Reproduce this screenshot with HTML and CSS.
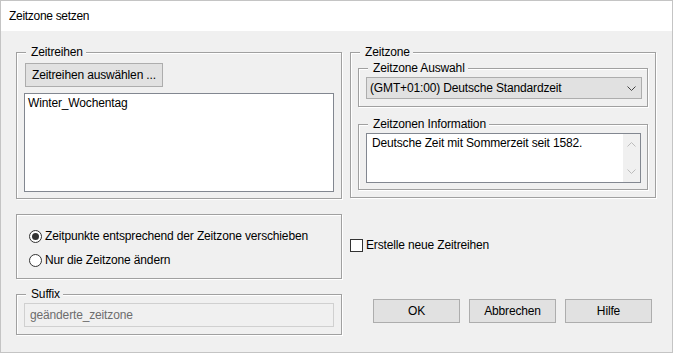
FILE: index.html
```html
<!DOCTYPE html>
<html lang="de">
<head>
<meta charset="utf-8">
<title>Zeitzone setzen</title>
<link rel="stylesheet" href="styles.css">
</head>
<body>
<div class="window">
  <div class="titlebar">Zeitzone setzen</div>
  <div class="content">
    <div class="group g-series">
      <div class="group-head"><span class="group-label">Zeitreihen</span></div>
      <div class="btn btn-select">Zeitreihen auswählen ...</div>
      <div class="listbox"><div class="item">Winter_Wochentag</div></div>
    </div>

    <div class="group g-zone">
      <div class="group-head"><span class="group-label">Zeitzone</span></div>
      <div class="group g-sel">
        <div class="group-head"><span class="group-label">Zeitzone Auswahl</span></div>
        <div class="combo">
          <span class="combo-text">(GMT+01:00) Deutsche Standardzeit</span>
          <svg class="chev" width="9" height="5" viewBox="0 0 9 5"><path d="M0.5 0.5 L4.5 4.5 L8.5 0.5" fill="none" stroke="#444" stroke-width="1"/></svg>
        </div>
      </div>
      <div class="group g-info">
        <div class="group-head"><span class="group-label">Zeitzonen Information</span></div>
        <div class="textarea">
          <div class="ta-text">Deutsche Zeit mit Sommerzeit seit 1582.</div>
          <div class="scrollbar">
            <svg width="9" height="5" viewBox="0 0 9 5"><path d="M0.5 4.5 L4.5 0.5 L8.5 4.5" fill="none" stroke="#bcbcbc" stroke-width="1"/></svg>
            <svg width="9" height="5" viewBox="0 0 9 5"><path d="M0.5 0.5 L4.5 4.5 L8.5 0.5" fill="none" stroke="#bcbcbc" stroke-width="1"/></svg>
          </div>
        </div>
      </div>
    </div>

    <div class="group g-mode">
      <div class="opt"><span class="radio checked"></span><span>Zeitpunkte entsprechend der Zeitzone verschieben</span></div>
      <div class="opt"><span class="radio"></span><span>Nur die Zeitzone ändern</span></div>
    </div>

    <div class="newseries">
      <div class="opt"><span class="check"></span><span>Erstelle neue Zeitreihen</span></div>
    </div>

    <div class="group g-suffix">
      <div class="group-head"><span class="group-label">Suffix</span></div>
      <div class="input">geänderte_zeitzone</div>
    </div>

    <div class="actions">
      <div class="btn btn-action">OK</div>
      <div class="btn btn-action">Abbrechen</div>
      <div class="btn btn-action">Hilfe</div>
    </div>
  </div>
</div>
</body>
</html>
```

FILE: styles.css
```css
html, body {
  margin: 0;
  padding: 0;
  background: #f0f0f0;
}
body {
  font-family: "Liberation Sans", Arial, sans-serif;
  font-size: 12px;
  letter-spacing: -0.15px;
  color: #000;
}
.window {
  width: 673px;
  height: 353px;
  box-sizing: border-box;
  border: 1px solid #c4c4c4;
  background: #f0f0f0;
  display: flex;
  flex-direction: column;
}
.titlebar {
  height: 30px;
  background: #fff;
  padding-left: 8px;
  line-height: 30px;
  letter-spacing: -0.3px;
}
.content {
  display: grid;
  grid-template-columns: 326px 306px;
  column-gap: 8px;
  align-items: start;
  padding: 21px 0 0 15px;
}
.group {
  border: 1px solid #a0a0a0;
  box-shadow: 1px 1px 0 #fff, inset 1px 1px 0 #fff;
}
.group-head {
  display: flex;
  height: 15px;
  margin-top: -8px;
}
.group-label {
  margin-left: 2px;
  padding: 0 3px 0 5px;
  line-height: 15px;
  background: #f0f0f0;
}
.g-series {
  padding: 0 7px 6px 7px;
}
.btn {
  box-sizing: border-box;
  height: 24px;
  border: 1px solid #adadad;
  background: #e1e1e1;
  display: flex;
  align-items: center;
  justify-content: center;
}
.btn-select {
  width: 138px;
  margin: 3px 0 0 1px;
}
.listbox {
  box-sizing: border-box;
  margin-top: 6px;
  height: 99px;
  border: 1px solid #828790;
  background: #fff;
  padding: 2px 3px;
}
.item {
  line-height: 15px;
}
.g-zone {
  padding: 0 7px 7px 7px;
}
.g-sel {
  margin-top: 8px;
  padding: 0 5px 7px 7px;
}
.combo {
  box-sizing: border-box;
  margin-top: 1px;
  height: 22px;
  border: 1px solid #adadad;
  background: #e1e1e1;
  display: flex;
  align-items: center;
  justify-content: space-between;
  padding: 0 5px 0 3px;
}
.chev {
  display: block;
}
.g-info {
  margin-top: 17px;
  padding: 0 6px 6px 7px;
}
.textarea {
  box-sizing: border-box;
  margin-top: 1px;
  height: 50px;
  border: 1px solid #828790;
  background: #fff;
  display: flex;
  justify-content: space-between;
}
.ta-text {
  padding: 2px 5px;
  line-height: 15px;
}
.scrollbar {
  width: 17px;
  background: #f0f0f0;
  display: flex;
  flex-direction: column;
  justify-content: space-between;
  align-items: center;
  padding: 8px 0 8px;
}
.scrollbar svg {
  display: block;
}
.g-mode {
  margin-top: 15px;
  padding: 13px 10px 10px 12px;
  display: flex;
  flex-direction: column;
  gap: 8px;
}
.opt {
  display: flex;
  align-items: center;
  gap: 3px;
  height: 16px;
}
.radio {
  box-sizing: border-box;
  width: 13px;
  height: 13px;
  border: 1px solid #333;
  border-radius: 50%;
  background: #fff;
  display: flex;
  align-items: center;
  justify-content: center;
  flex: none;
}
.radio.checked::after {
  content: "";
  width: 7px;
  height: 7px;
  border-radius: 50%;
  background: #333;
}
.check {
  box-sizing: border-box;
  width: 13px;
  height: 13px;
  border: 1px solid #333;
  background: #fff;
  flex: none;
}
.newseries {
  margin-top: 38px;
}
.g-suffix {
  margin-top: 15px;
  padding: 0 7px 7px 7px;
}
.input {
  box-sizing: border-box;
  margin-top: 1px;
  height: 24px;
  border: 1px solid #d0d0d0;
  background: #f0f0f0;
  color: #6d6d6d;
  display: flex;
  align-items: center;
  padding-left: 5px;
}
.actions {
  margin-top: 20px;
  display: flex;
  justify-content: flex-end;
  gap: 9px;
  padding-right: 4px;
}
.btn-action {
  width: 87px;
}
```
